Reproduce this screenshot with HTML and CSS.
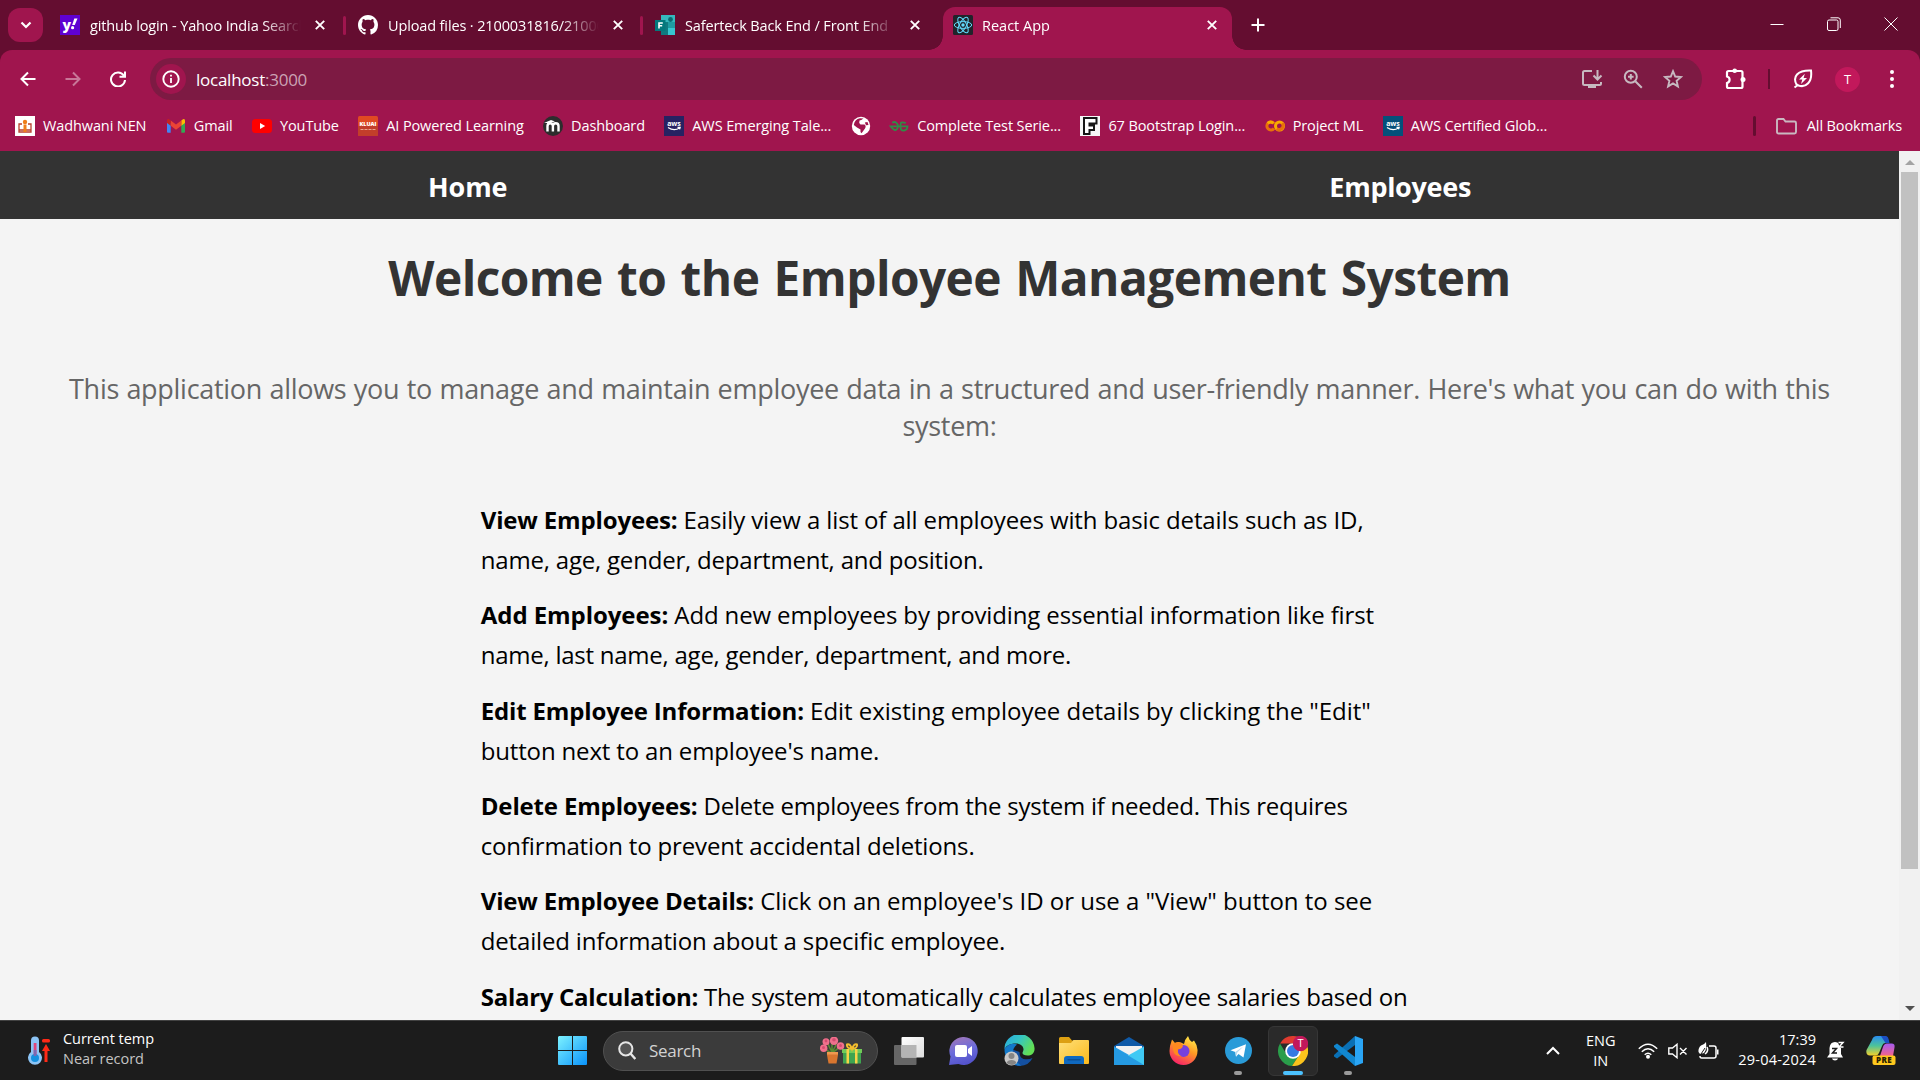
FILE: index.html
```html
<!DOCTYPE html>
<html lang="en">
<head>
<meta charset="utf-8">
<title>React App</title>
<link rel="stylesheet" href="styles.css">
</head>
<body>
<div class="screen">

<header class="tabstrip">
  <button class="tab-search"><svg width="12" height="8" viewBox="0 0 12 8"><path d="M1.5 1.5 6 6l4.500-4.500" fill="none" stroke="#fff" stroke-width="2.200"/></svg></button>
  <div class="tab tab-1">
    <svg class="fav" viewBox="0 0 20 20"><rect width="20" height="20" fill="#5f01d1"/><text x="2.500" y="14.500" class="yahoo">y</text><path d="M14.300 3.500h3.200l-2.700 6.500h-2.600z" fill="#fff"/><circle cx="12.600" cy="12.700" r="1.600" fill="#fff"/></svg>
    <span class="tab-title">github login - Yahoo India Search</span>
    <svg class="close" viewBox="0 0 10 10"><path d="M.8.8l8.400 8.400M9.200.8.8 9.200"/></svg>
  </div>
  <i class="tab-sep"></i>
  <div class="tab tab-2">
    <svg class="fav" viewBox="0 0 16 16"><path fill="#fff" d="M8 0C3.580 0 0 3.580 0 8c0 3.540 2.290 6.530 5.470 7.590.4.070.55-.17.55-.38 0-.19-.010-.82-.010-1.490-2.010.37-2.530-.49-2.690-.94-.09-.23-.48-.94-.82-1.130-.28-.15-.68-.52-.010-.53.63-.010 1.080.58 1.230.82.72 1.210 1.870.87 2.330.66.070-.52.28-.87.51-1.070-1.780-.2-3.640-.89-3.640-3.950 0-.87.310-1.590.82-2.150-.080-.2-.36-1.020.080-2.120 0 0 .67-.21 2.200.82.640-.18 1.320-.27 2-.27s1.360.09 2 .27c1.530-1.040 2.200-.82 2.200-.82.440 1.100.160 1.920.080 2.120.510.56.82 1.270.82 2.150 0 3.070-1.870 3.750-3.650 3.950.290.25.540.73.540 1.480 0 1.070-.010 1.930-.010 2.200 0 .21.150.46.550.38A8.010 8.010 0 0 0 16 8c0-4.420-3.580-8-8-8z"/></svg>
    <span class="tab-title">Upload files · 2100031816/21000</span>
    <svg class="close" viewBox="0 0 10 10"><path d="M.8.8l8.400 8.400M9.200.8.8 9.200"/></svg>
  </div>
  <i class="tab-sep"></i>
  <div class="tab tab-3">
    <svg class="fav" viewBox="0 0 20 20"><path d="M6 0h14v7H6z" fill="#35b8bd"/><path d="M6 7h14v13H6z" fill="#0f7a80"/><path d="M13 7h7v6h-7z" fill="#1f9ba1"/><path d="M13 13h7v7h-7z" fill="#37c6d0"/><circle cx="15.500" cy="4.500" r="2.400" fill="#0b6a70"/><path d="M0 5h10.500v11H0z" fill="#03787c"/><path d="M4 13.500V8h3.800M4 10.800h3.200" fill="none" stroke="#fff" stroke-width="1.600"/></svg>
    <span class="tab-title">Saferteck Back End / Front End</span>
    <svg class="close" viewBox="0 0 10 10"><path d="M.8.8l8.400 8.400M9.200.8.8 9.200"/></svg>
  </div>
  <div class="tab tab-active">
    <svg class="fav" viewBox="0 0 20 20"><rect width="20" height="20" rx="1.500" fill="#20232a"/><g fill="none" stroke="#61dafb" stroke-width="1"><ellipse cx="10" cy="10" rx="8.700" ry="3.400"/><ellipse cx="10" cy="10" rx="8.700" ry="3.400" transform="rotate(60 10 10)"/><ellipse cx="10" cy="10" rx="8.700" ry="3.400" transform="rotate(120 10 10)"/></g><circle cx="10" cy="10" r="1.700" fill="#61dafb"/></svg>
    <span class="tab-title">React App</span>
    <svg class="close" viewBox="0 0 10 10"><path d="M.8.8l8.400 8.400M9.200.8.8 9.200"/></svg>
  </div>
  <svg class="new-tab" width="14" height="14" viewBox="0 0 14 14"><path d="M7 .5v13M.5 7h13" stroke="#fff" stroke-width="2"/></svg>
  <div class="window-buttons">
    <svg width="14" height="14" viewBox="0 0 14 14"><path d="M.5 7.500h13" stroke="#fff"/></svg>
    <svg width="14" height="14" viewBox="0 0 14 14"><rect x=".5" y="3" width="10.500" height="10.500" rx="1.500" fill="none" stroke="#fff"/><path d="M3.500.8H11a2.300 2.300 0 0 1 2.300 2.300v7.900" fill="none" stroke="#fff"/></svg>
    <svg width="14" height="14" viewBox="0 0 14 14"><path d="M.5.5l13 13M13.500.5l-13 13" stroke="#fff"/></svg>
  </div>
</header>

<div class="chrome">
<div class="toolbar">
  <svg class="nav-ic" viewBox="0 0 16 16"><path d="M15.500 8H2M8 1.500 1.500 8 8 14.500"/></svg>
  <svg class="nav-ic dim" viewBox="0 0 16 16"><path d="M.5 8H14M8 1.500 14.500 8 8 14.500"/></svg>
  <svg class="nav-ic" viewBox="0 0 16 16"><path d="M13.800 4.500A7 7 0 1 0 15 9M15 .5v5.200H9.500"/></svg>
  <div class="omnibox">
    <span class="site-info"><svg width="18" height="18" viewBox="0 0 18 18"><circle cx="9" cy="9" r="7.700" fill="none" stroke="#fff" stroke-width="1.900"/><path d="M9 8v5M9 4.700v1.900" stroke="#fff" stroke-width="1.800"/></svg></span>
    <span class="url">localhost<span class="port">:3000</span></span>
    <span class="omni-actions">
      <svg width="22" height="20" viewBox="0 0 22 20"><path d="M11 2H3.500Q2 2 2 3.500v11Q2 16 3.500 16h15q1.500 0 1.500-1.500V13" fill="none" stroke="#c7b9c0" stroke-width="2"/><path d="M7 16h8v3H7z" fill="#c7b9c0"/><path d="M16.500 1v9M12.500 6.500l4 4 4-4" fill="none" stroke="#c7b9c0" stroke-width="2"/></svg>
      <svg width="20" height="20" viewBox="0 0 20 20" fill="none" stroke="#c7b9c0" stroke-width="2"><circle cx="7.800" cy="7.800" r="6"/><path d="M12.300 12.300l6.500 6.500M7.800 5v5.600M5 7.800h5.600"/></svg>
      <svg width="20" height="20" viewBox="0 0 20 20"><path d="M10 2.200l2.200 5.300 5.800.5-4.400 3.800 1.300 5.600L10 14.400l-4.900 3 1.300-5.600L2 8l5.800-.5z" fill="none" stroke="#c7b9c0" stroke-width="1.900"/></svg>
    </span>
  </div>
  <svg class="ext" width="22" height="22" viewBox="0 0 22 22"><path d="M3 4.500Q3 3 4.500 3H17q1.500 0 1.500 1.500v14q0 1.500-1.500 1.500H4.500Q3 20 3 18.500V15q2.600-.7 2.600-3.200T3 8.500z" fill="none" stroke="#fff" stroke-width="2.200"/><circle cx="10.700" cy="2.700" r="2.300" fill="#fff"/><circle cx="19" cy="11.600" r="2.500" fill="#fff"/></svg>
  <i class="bar-sep"></i>
  <svg class="leaf" width="20" height="20" viewBox="0 0 20 20"><path d="M3.500 15.500C-.5 8 4 1 18 1.500 19.500 13 13 19 5.500 16.500zM1.500 18.500l4-3" fill="none" stroke="#fff" stroke-width="2"/><path d="M11.800 4.800 6 10.500h3.300L8 15l6-6h-3.400z" fill="#fff"/></svg>
  <span class="avatar">T</span>
  <svg class="dots" width="4" height="18" viewBox="0 0 4 18" fill="#fff"><circle cx="2" cy="2" r="2"/><circle cx="2" cy="9" r="2"/><circle cx="2" cy="16" r="2"/></svg>
</div>

<nav class="bookmarks">
  <span class="bm"><svg viewBox="0 0 20 20"><path d="M0 0h20v20H0z" fill="#fff"/><path d="M7 8H4v8h12V8h-3M4 14h12" fill="none" stroke="#b8402e" stroke-width="1.300"/><path d="M8.500 16V8.500h3V16z" fill="#ef7f1a"/><circle cx="10" cy="6" r="2.200" fill="#ef7f1a"/></svg>Wadhwani NEN</span>
  <span class="bm"><svg viewBox="0 0 20 20"><path d="M1 4.500v11.200q0 1 1 1h2.700V7.500z" fill="#4285f4"/><path d="M19 4.500v11.200q0 1-1 1h-2.700V7.500z" fill="#34a853"/><path d="M15.300 4.500 17 3.200q2-.9 2 1.500v2.200l-3.700 2.800z" fill="#fbbc04"/><path d="M4.700 9.700v-5.200L10 8.500l5.300-4v5.200L10 13.700z" fill="#ea4335"/><path d="M1 6.900V4.700q0-2.400 2-1.500l1.700 1.300v5.200z" fill="#c5221f"/></svg>Gmail</span>
  <span class="bm"><svg viewBox="0 0 20 20"><rect y="3" width="20" height="14" rx="3.500" fill="#f00"/><path d="M8 7v6l5.200-3z" fill="#fff"/></svg>YouTube</span>
  <span class="bm"><svg viewBox="0 0 20 20"><rect width="20" height="20" rx="1.500" fill="#e04a22"/><path d="M0 10h20v8.500q0 1.500-1.500 1.500h-17Q0 20 0 18.500z" fill="#c23e2a"/><text x="10" y="10.300" class="kl">KLUAI</text><path d="M2.500 13.500h15" stroke="#f0b09a" stroke-width=".9" stroke-dasharray="3 1"/></svg>AI Powered Learning</span>
  <span class="bm"><svg viewBox="0 0 20 20"><circle cx="10" cy="10" r="10" fill="#2d2d2d"/><path d="M4.500 15.500V10q0-2.700 2.700-2.700T9.900 10v5.500M9.900 10q0-2.700 2.800-2.700t2.800 2.700v5.500" fill="none" stroke="#fff" stroke-width="2.400"/><path d="M1 7l7-3 4 1.500L6 7z" fill="#fff"/></svg>Dashboard</span>
  <span class="bm"><svg viewBox="0 0 20 20"><path d="M0 0h20v20H0z" fill="#262262"/><text x="10" y="10" class="aws">aws</text><path d="M4 11.500q6 4 11.500.5M13.500 11.300h2.700l-.6 2" fill="none" stroke="#fff" stroke-width="1.200"/></svg>AWS Emerging Tale...</span>
  <span class="bm bm-globe"><svg viewBox="0 0 20 20"><circle cx="10" cy="10" r="9.200" fill="#fff"/><path d="M12.500 2.500Q10 4.500 8.500 4.500 7.500 7 9.500 8.500h4q2 1.500.5 4l-3.500 4.800q-1.500-1-1-3.800L6 11.500 2.800 9Q3.500 3.500 9 2.300zM13.800 6.500l2.700-.5 1 3-2.500.3z" fill="#a0154e"/></svg></span>
  <span class="bm"><svg viewBox="0 0 20 20"><g fill="none" stroke="#2f8d46" stroke-width="1.800"><path d="M3.200 6.800Q6 5 8 7.500t0 5.500-6.500-2.700h17Q18.500 14 15 14.500t-3.500-3.500.800-4.500 4.500.300"/></g></svg>Complete Test Serie...</span>
  <span class="bm"><svg viewBox="0 0 20 20"><path d="M0 0h20v20H0z" fill="#f6f6f6"/><path d="M4 2h12.500v5.500H9.500v2H14V14H9.500v4H4z" fill="#fff" stroke="#151515" stroke-width="2"/></svg>67 Bootstrap Login...</span>
  <span class="bm"><svg viewBox="0 0 20 20"><g fill="none" stroke-width="3"><path d="M9 7.500A4 4 0 1 0 9 12.500" stroke="#e8710a"/><circle cx="14.500" cy="10" r="4" stroke="#f9ab00"/><path d="M11.700 12.800A4 4 0 0 0 17.300 7.200" stroke="#e8710a"/><path d="M2.700 7.200A4 4 0 0 1 8.300 7.200" stroke="#f9ab00"/></g></svg>Project ML</span>
  <span class="bm"><svg viewBox="0 0 20 20"><path d="M0 0h20v20H0z" fill="#04507a"/><text x="10" y="10" class="aws">aws</text><path d="M4 11.500q6 4 11.500.5M13.500 11.300h2.700l-.6 2" fill="none" stroke="#fff" stroke-width="1.200"/></svg>AWS Certified Glob...</span>
  <i class="bar-sep bm-sep"></i>
  <span class="bm bm-all"><svg viewBox="0 0 21 17"><path d="M1 2.500Q1 1 2.500 1h5l2 2.500h9Q20 3.500 20 5v9q0 1.500-1.500 1.500h-16Q1 15.500 1 14z" fill="none" stroke="#c9b8c0" stroke-width="1.900"/></svg>All Bookmarks</span>
</nav>
</div>

<div class="viewport">
  <div class="page">
    <nav class="site-nav"><a>Home</a><a>Employees</a></nav>
    <h1>Welcome to the Employee Management System</h1>
    <p class="intro">This application allows you to manage and maintain employee data in a structured and user-friendly manner. Here's what you can do with this system:</p>
    <ul class="features">
      <li><strong>View Employees:</strong> Easily view a list of all employees with basic details such as ID, name, age, gender, department, and position.</li>
      <li><strong>Add Employees:</strong> Add new employees by providing essential information like first name, last name, age, gender, department, and more.</li>
      <li><strong>Edit Employee Information:</strong> Edit existing employee details by clicking the "Edit" button next to an employee's name.</li>
      <li><strong>Delete Employees:</strong> Delete employees from the system if needed. This requires confirmation to prevent accidental deletions.</li>
      <li><strong>View Employee Details:</strong> Click on an employee's ID or use a "View" button to see detailed information about a specific employee.</li>
      <li><strong>Salary Calculation:</strong> The system automatically calculates employee salaries based on</li>
    </ul>
  </div>
  <div class="scrollbar">
    <svg width="10" height="5" viewBox="0 0 10 5"><path d="M0 5l5-5 5 5z" fill="#a3a3a3"/></svg>
    <i class="thumb"></i>
    <svg class="down" width="10" height="5" viewBox="0 0 10 5"><path d="M0 0l5 5 5-5z" fill="#505050"/></svg>
  </div>
</div>

<footer class="taskbar">
  <div class="weather">
    <svg width="24" height="29" viewBox="0 0 24 29"><path d="M4 4.500a4 4 0 0 1 8 0V16a7 7 0 1 1-8 0z" fill="#8cc4f5"/><path d="M6.700 7h2.800v12H6.700z" fill="#e0457b"/><circle cx="8" cy="22" r="4" fill="#1490df"/><path d="M6.700 14h2.800v6H6.700z" fill="#7c67b0"/><rect x="15" y="3" width="8" height="3.500" rx="1.500" fill="#ff2a17"/><path d="M19 8l4 7h-2.500v11h-3V15H15z" fill="#ff2a17"/></svg>
    <div class="weather-text"><span>Current temp</span><span class="sub">Near record</span></div>
  </div>
  <div class="apps">
    <svg class="win" width="29" height="29" viewBox="0 0 29 29"><defs><linearGradient id="w" gradientUnits="userSpaceOnUse" x1="0" y1="0" x2="29" y2="29"><stop stop-color="#7df2ff"/><stop offset="1" stop-color="#0a93fb"/></linearGradient></defs><path d="M1 0h13v14H0V1zM15 0h13q1 0 1 1v13H15zM0 15h14v14H1q-1 0-1-1zM15 15h14v13q0 1-1 1H15z" fill="url(#w)"/></svg>
    <div class="search">
      <svg width="18" height="19" viewBox="0 0 18 19"><circle cx="7.800" cy="7.800" r="6.600" fill="#555" stroke="#e6e6e6" stroke-width="2"/><path d="M12.500 12.500l4.800 5.500" stroke="#e6e6e6" stroke-width="2.400"/></svg>
      <span>Search</span>
      <svg class="gift" width="43" height="27" viewBox="0 0 43 27"><path d="M12 16V6M12 16Q6 14 4 9M12 16q5-3 8-7M12 15Q8 8 8 6M12 15q4-6 4-8" stroke="#5b8c32" stroke-width="1.500" fill="none"/><g fill="#f0708c"><circle cx="14" cy="3.800" r="4.200"/><circle cx="6" cy="4.800" r="3.500"/><circle cx="3.700" cy="11.300" r="3.700"/><circle cx="20.500" cy="9" r="3.800"/></g><g fill="#d34c70"><circle cx="14" cy="2.700" r="1.800"/><circle cx="6" cy="4" r="1.400"/><circle cx="3.500" cy="10.500" r="1.500"/><circle cx="20.500" cy="8.500" r="1.500"/></g><path d="M7 15h11v3l-1.500 8.500h-8L7 18z" fill="#d9762f"/><path d="M7 15h11v2.500H7z" fill="#ef9850"/><path d="M22 12h20v4H22z" fill="#70cb58"/><path d="M23 16h18v10.500H23z" fill="#3ea450"/><path d="M26.500 12h2.500v14.500h-2.500zM35 12h2.500v14.500H35z" fill="#f7d348"/><path d="M32 12q-6-1-5-4.500 3-1 5 4.500 2-5.500 5-4.500 1 3.500-5 4.500z" fill="none" stroke="#f2bd2e" stroke-width="2"/></svg>
    </div>
    <svg class="taskview" width="30" height="28" viewBox="0 0 30 28"><defs><linearGradient id="tv" x2="1" y2="1"><stop stop-color="#fff"/><stop offset="1" stop-color="#ddd"/></linearGradient></defs><rect y="8" width="22.500" height="20" rx="1" fill="#666"/><rect x="7.500" width="22.500" height="20.500" rx="1" fill="url(#tv)"/><path d="M7.500 8h15v12.500h-15z" fill="#b4b4b4"/></svg>
    <svg class="chat" width="29" height="28" viewBox="0 0 29 28"><defs><linearGradient id="ch" x1=".2" y1="0" x2=".5" y2="1"><stop stop-color="#a176b8"/><stop offset=".5" stop-color="#6c6cdb"/><stop offset="1" stop-color="#5352cb"/></linearGradient></defs><path d="M15 0a14 14 0 1 1-5.500 27L0 28l1.500-8.500A14 14 0 0 1 15 0z" fill="url(#ch)"/><rect x="6" y="8" width="12" height="12" rx="2" fill="#fff"/><path d="M19 12l4-3v10l-4-3z" fill="#fff"/></svg>
    <svg class="edge" width="31" height="31" viewBox="0 0 31 31"><defs><linearGradient id="e1" y1="0" x2="1" y2=".5"><stop stop-color="#27a7e2"/><stop offset=".5" stop-color="#35c5c4"/><stop offset="1" stop-color="#62df55"/></linearGradient></defs><path d="M1 12C0 22 6 31 16 31q9-.5 12.500-8-4 2-9 1-4-1.500-4-7z" fill="#1450a0"/><path d="M.5 15A15 15 0 0 1 30.500 13c.5 5-3 7.500-7 7.500-4 0-6-1.500-4.500-4 2-4-2-8-7-8C6 8.500 1 11 .5 15z" fill="url(#e1)"/><path d="M.5 15C3 9 9 7.500 13 9.500q-5 4-4 10t8 11A15.500 15.500 0 0 1 .5 15z" fill="#1379c9"/><circle cx="7.500" cy="23.500" r="7" fill="#c9c9c9"/><circle cx="7.500" cy="21" r="3" fill="#858585"/><path d="M2.500 28q1-3 5-3t5 3q-4 4-10 0z" fill="#858585"/></svg>
    <svg class="folder" width="30" height="27" viewBox="0 0 30 27"><defs><linearGradient id="fo" x2="1" y2="1"><stop stop-color="#ffe07a"/><stop offset="1" stop-color="#fbb91b"/></linearGradient></defs><path d="M0 1.500Q0 0 1.500 0H10l3 3.500H28V12H0z" fill="#dda012"/><path d="M0 6h12l2.500-3H29q1 0 1 1v22q0 1-1 1H1q-1 0-1-1z" fill="url(#fo)"/><path d="M5 27v-5q0-3 3-3h14q3 0 3 3v5z" fill="#0f69c0"/><path d="M8.500 22.800h13" stroke="#0a4a8c" stroke-width="1.200"/></svg>
    <svg class="mail" width="30" height="28" viewBox="0 0 30 28"><path d="M0 9 15 0l15 9v5H0z" fill="#0f5aa8"/><path d="M2 9h26v4L15 20 2 13z" fill="#f1f1f1"/><path d="M0 9.500l15 8.500L0 28z" fill="#2ba1e8"/><path d="M30 9.500V28H0l15-10z" fill="#3fc9f4"/><path d="M0 28V10l30 18z" fill="#259ae2"/></svg>
    <svg class="firefox" width="29" height="29" viewBox="0 0 29 29"><defs><linearGradient id="ff" x1=".8" x2=".3" y2="1"><stop stop-color="#fff04e"/><stop offset=".45" stop-color="#ff9a23"/><stop offset="1" stop-color="#f81f6a"/></linearGradient></defs><path d="M3 3.500 6 7q3-1.500 6-.5L15 8q1-5 4-8 1 4 4 6l2-1.500Q29 10 28.500 15A14 14 0 0 1 .5 15Q.5 10 3 3.500z" fill="url(#ff)"/><circle cx="14.500" cy="15" r="6" fill="#7740dc"/><path d="M4 8q4-3 8-1l2 3q-1 3-5 3.500-1 5 4 7-8 0-9-7z" fill="#ff8a1f"/></svg>
    <span class="app running"><svg width="27" height="27" viewBox="0 0 27 27"><circle cx="13.500" cy="13.500" r="13.500" fill="#2a9bd8"/><path d="M5.500 13.300 21 7.300l-2.500 13.200-5-3.500-2.500 2.700-.7-4.700z" fill="#fff"/><path d="M10.300 15l8-5.500-6 6-1.300 4.200z" fill="#b5d9ee"/></svg></span>
    <span class="app active"><svg width="30" height="30" viewBox="0 0 30 30"><path d="M2 7.500A15 15 0 0 1 28 7.500H15z" fill="#df3b2f"/><path d="M2 7.500A15 15 0 0 0 14 30l7.500-11.500L9 19z" fill="#2a9d4a"/><path d="M28 7.500A15 15 0 0 1 14 30l7.500-11.500L15 7.500z" fill="#fcc31c"/><circle cx="15" cy="15" r="7.800" fill="#fff"/><circle cx="15" cy="15" r="6" fill="#3779e4"/><circle cx="22.500" cy="7.500" r="7.700" fill="#c2185b"/><text x="22.500" y="11" class="badge">T</text></svg></span>
    <span class="app running code"><svg width="30" height="30" viewBox="0 0 30 30"><path d="M22 0v9L4 22.500 1 20.500V19z" fill="#0a70b5"/><path d="M22 30v-9L4 7.500 1 9.500V11z" fill="#1187d0"/><path d="M22 0l8 3v24l-8 3z" fill="#2aa5f5"/></svg></span>
  </div>
  <div class="tray">
    <svg width="14" height="9" viewBox="0 0 14 9"><path d="M1 8l6-6 6 6" fill="none" stroke="#fff" stroke-width="2"/></svg>
    <div class="lang"><span>ENG</span><span>IN</span></div>
    <svg class="wifi" width="20" height="16" viewBox="0 0 20 16"><g fill="none" stroke="#fff" stroke-width="1.500"><path d="M.8 5.800q9.200-9 18.400 0M3.800 8.800q6.200-6 12.400 0M6.700 11.700q3.300-3 6.600 0"/></g><circle cx="10" cy="13.800" r="2" fill="#fff"/></svg>
    <svg class="spk" width="20" height="16" viewBox="0 0 20 16" fill="none" stroke="#fff" stroke-width="1.400"><path d="M.8 5h3.700L9 1.300v13.400L4.500 11H.8zM12 5l6.500 6.500M18.500 5 12 11.500"/></svg>
    <svg class="bat" width="21" height="18" viewBox="0 0 21 18"><path d="M11 4h5q2 0 2 2v8q0 2-2 2H3.500Q2 16 2 14" fill="none" stroke="#fff" stroke-width="1.500"/><path d="M19 7.500h1.500v5H19z" fill="#fff"/><path d="M8 0q-2 3-5 3.500Q0 6 .5 10L2 12l4-1Q9 8 8 0z" fill="#fff"/><path d="M3 12l4-6" stroke="#1c1c1c"/><path d="M9 5q2 4-2 7" stroke="#fff" fill="none" stroke-width="1.500"/></svg>
    <div class="clock"><span>17:39</span><span class="date">29-04-2024</span></div>
    <svg class="bell" width="18" height="20" viewBox="0 0 18 20"><path d="M2.500 7Q3 1 8 1t6 6v6l2 3.500H0L2.500 13z" fill="#fff"/><path d="M5 17.500h6q-.5 2-3 2t-3-2z" fill="#fff"/><path d="M5 7.500h4.500L5.500 12H10" fill="none" stroke="#1c1c1c" stroke-width="1.500"/><path d="M10.500 0H18v7h-5z" fill="#1c1c1c"/><path d="M11.500 1.500H16L12 6h4.500" fill="none" stroke="#fff" stroke-width="1.500"/></svg>
    <svg class="copilot" width="30" height="29" viewBox="0 0 30 29"><defs><linearGradient id="c1" x2="0" y2="1"><stop stop-color="#2a8df0"/><stop offset=".5" stop-color="#4cc39a"/><stop offset="1" stop-color="#f3d02b"/></linearGradient><linearGradient id="c2" x2="0" y2="1"><stop stop-color="#a55bf0"/><stop offset="1" stop-color="#f4638a"/></linearGradient></defs><path d="M6 4q1-4 5-4h7q3 0 4 3l1 4h-4q-2 0-3 3l-3 7q-1 2.500-4 2.500H4Q-.5 19.500.5 14z" fill="url(#c1)"/><path d="M15 0h4q3 0 3.500 3l1 4h-4z" fill="#1b4fc4"/><path d="M17 11q1-3.500 4-3.500h4.500q3.800 0 3 4L27 20H14z" fill="url(#c2)"/><rect x="6.500" y="19.500" width="23" height="9.500" rx="2" fill="#ffc81e"/><text x="18" y="27" class="pre">PRE</text></svg>
  </div>
</footer>
</div>
</body>
</html>
```
FILE: styles.css
```css
* { box-sizing: border-box; }
body { margin: 0; font-family: "Open Sans", "Noto Sans", sans-serif; overflow: hidden; }
svg { display: block; flex: none; }
button { border: 0; padding: 0; }

.screen { width: 1920px; height: 1080px; display: flex; flex-direction: column; }

/* tab strip */
.tabstrip { height: 50px; background: #640d30; display: flex; align-items: flex-start; color: #fff; font-size: 14.5px; letter-spacing: -.13px; flex: none; }
.tab-search { width: 35px; height: 34px; margin: 8px 0 0 8px; border-radius: 12px; background: #a0154e; display: flex; align-items: center; justify-content: center; flex: none; }
.tab { display: flex; align-items: center; height: 43px; margin-top: 7px; padding-bottom: 7px; flex: none; }
.fav { width: 20px; height: 20px; }
.tab-title { margin-left: 10px; padding-top: 1px; white-space: nowrap; overflow: hidden; width: 211px; line-height: 24px; -webkit-mask-image: linear-gradient(90deg, #000 82%, transparent 100%); mask-image: linear-gradient(90deg, #000 82%, transparent 100%); }
.close { width: 10px; height: 10px; margin-left: 14px; fill: none; stroke: #fff; stroke-width: 1.9; }
.tab-1 { margin-left: 17px; width: 283px; }
.tab-2 { margin-left: 12px; width: 282px; }
.tab-3 { margin-left: 12px; width: 288px; }
.tab-sep { width: 3px; height: 19px; margin-top: 16px; background: #a0154e; border-radius: 2px; flex: none; }
.tab-active { position: relative; width: 289px; padding-left: 10px; background: #a0154e; border-radius: 12px 12px 0 0; }
.tab-active .tab-title { width: 225px; margin-left: 9px; letter-spacing: 0; }
.tab-active .close { margin-left: 0; }
.tab-active::before, .tab-active::after { content: ""; position: absolute; bottom: 0; width: 14px; height: 14px; }
.tab-active::before { left: -14px; background: radial-gradient(circle at 0 0, transparent 13.5px, #a0154e 14px); }
.tab-active::after { right: -14px; background: radial-gradient(circle at 100% 0, transparent 13.5px, #a0154e 14px); }
.new-tab { margin: 18px 0 0 19px; }
.window-buttons { margin: 17px 22px 0 auto; display: flex; gap: 43px; }
.yahoo { font: 800 14px "Open Sans", sans-serif; fill: #fff; }

/* toolbar */
.chrome { height: 101px; flex: none; background: linear-gradient(#640d30, #640d30) 0 0 / 100% 14px no-repeat; }
.toolbar { height: 58px; background: #a0154e; border-radius: 12px 12px 0 0; display: flex; align-items: center; padding: 0 25px 0 20px; }
.nav-ic { width: 16px; height: 16px; margin-right: 29px; fill: none; stroke: #fff; stroke-width: 2; }
.nav-ic.dim { opacity: .42; }
.omnibox { width: 1552px; height: 42px; margin-left: -5px; border-radius: 21px; background: #7d1a43; display: flex; align-items: center; padding-left: 6px; }
.site-info { width: 30px; height: 30px; border-radius: 50%; background: #a0154e; display: flex; align-items: center; justify-content: center; }
.url { margin-left: 10px; color: #fff; font-size: 17px; letter-spacing: -.25px; }
.port { color: #cba3b4; }
.omni-actions { margin: 0 19px 0 auto; display: flex; align-items: center; gap: 20px; }
.ext { margin-left: 22px; }
.bar-sep { width: 2px; height: 20px; background: #640d30; margin-left: 22px; }
.leaf { margin-left: 23px; }
.avatar { width: 25px; height: 25px; margin-left: 22px; border-radius: 50%; background: #c2185b; color: #fff; font-size: 13px; line-height: 25px; text-align: center; }
.dots { margin-left: 30px; }

/* bookmarks */
.bookmarks { height: 43px; background: #a0154e; display: flex; align-items: center; padding: 0 18px 7px 15px; color: #fff; font-size: 14.5px; line-height: 24px; letter-spacing: -.11px; white-space: nowrap; }
.bm { display: flex; align-items: center; gap: 8px; margin-right: 19.4px; }
.bm svg { width: 20px; height: 20px; }
.bm-globe { margin-right: 18.5px; }
.bm-sep { width: 3px; margin: 0 20px 0 auto; border-radius: 2px; }
.bm-all { margin-right: 0; gap: 10px; }
.bm-all svg { width: 21px; height: 17px; }
.kl { font: 800 5.5px "Open Sans", sans-serif; fill: #fff; text-anchor: middle; letter-spacing: 0; }
.aws { font: 700 7px "Open Sans", sans-serif; fill: #fff; text-anchor: middle; letter-spacing: 0; }

/* web page */
.viewport { flex: 1; min-height: 0; display: flex; background: #f4f4f4; }
.page { flex: 1; overflow: hidden; }
.site-nav { height: 68px; padding: 2px 17px 0; background: #333; display: flex; justify-content: space-around; align-items: center; color: #fff; font-size: 27px; font-weight: 700; letter-spacing: -.1px; }
.site-nav a:last-child { letter-spacing: -.3px; }
h1 { margin: 26px 0 0; text-align: center; font-size: 47.8px; line-height: 66px; letter-spacing: -.55px; word-spacing: 2.4px; color: #333; }
.intro { margin: 58.5px 40px 0; text-align: center; font-size: 27px; line-height: 37px; letter-spacing: -.29px; word-spacing: .7px; color: #666; }
.features { width: 937.5px; margin: 56.5px auto 0; padding: 0; list-style: none; font-size: 24px; line-height: 40px; letter-spacing: -.16px; color: #000; }
.features li { margin-bottom: 15.35px; }
.features strong { letter-spacing: -.16px; }
.features li:nth-child(1) { letter-spacing: -.2px; }
.features li:nth-child(1)::first-line { letter-spacing: -.12px; }
.features li:nth-child(2) { letter-spacing: -.25px; }
.features li:nth-child(2)::first-line { letter-spacing: -.13px; }
.features li:nth-child(2) strong { letter-spacing: -.06px; }
.features li:nth-child(3)::first-line { letter-spacing: -.03px; }
.features li:nth-child(4)::first-line { letter-spacing: -.24px; }
.features li:nth-child(5)::first-line { letter-spacing: -.03px; }
.features li:nth-child(6) { letter-spacing: -.2px; }
.features li:nth-child(6) strong { letter-spacing: -.28px; }

.scrollbar { width: 21px; background: #f1f1f1; display: flex; flex-direction: column; align-items: center; padding-top: 9px; }
.thumb { width: 17px; height: 697px; margin-top: 7px; background: #c1c1c1; }
.down { margin: auto 0 9px; }

/* taskbar */
.taskbar { height: 60px; flex: none; background: #1c1c1c; border-top: 1px solid #424242; color: #fff; display: grid; grid-template-columns: 558px 1fr auto; align-items: center; font-size: 14.5px; }
.weather { display: flex; align-items: center; gap: 12px; padding-left: 27px; line-height: 20px; letter-spacing: -.04px; }
.weather-text { padding-bottom: 3px; }
.weather span { display: block; }
.weather .sub { color: #c4c4c4; }
.apps { display: flex; align-items: center; }
.search { width: 275px; height: 40px; margin-left: 16px; border-radius: 20px; background: #3b3b3b; border: 1px solid #505050; display: flex; align-items: center; padding: 0 14px; font-size: 17px; letter-spacing: -.3px; color: #d2d2d2; }
.search span { margin-left: 13px; }
.gift { margin-left: auto; }
.taskview { margin-left: 16px; }
.chat { margin-left: 25px; }
.edge { margin-left: 26px; }
.folder { margin-left: 24px; }
.mail { margin-left: 25px; }
.firefox { margin-left: 25px; }
.app { position: relative; width: 50px; height: 50px; margin-left: 4px; border-radius: 6px; display: flex; align-items: center; justify-content: center; }
.firefox + .app { margin-left: 15px; }
.app.active { margin-left: 5px; background: #2a2a2a; border: 1px solid #363636; }
.app.code { margin-left: 5px; }
.app::after { content: ""; position: absolute; bottom: 1px; left: 21px; width: 8px; height: 4px; border-radius: 2px; background: #9a9a9a; }
.app.active::after { bottom: 0; left: 14px; width: 20px; background: #4cc2ff; }
.badge { font: 11px "Open Sans", sans-serif; fill: #fff; text-anchor: middle; }
.tray { display: flex; align-items: center; padding-right: 24px; line-height: 20px; }
.lang { margin-left: 26px; text-align: center; letter-spacing: -.1px; }
.lang span, .clock span { display: block; }
.clock { padding-bottom: 2px; }
.wifi { margin-left: 23px; }
.spk { margin-left: 10px; }
.bat { margin-left: 10px; }
.clock { margin-left: 19px; text-align: right; }
.clock .date { letter-spacing: .2px; }
.bell { margin-left: 11px; }
.copilot { margin-left: 21px; }
.pre { font: 800 8px "Open Sans", sans-serif; fill: #2a2100; text-anchor: middle; letter-spacing: .4px; }
```
